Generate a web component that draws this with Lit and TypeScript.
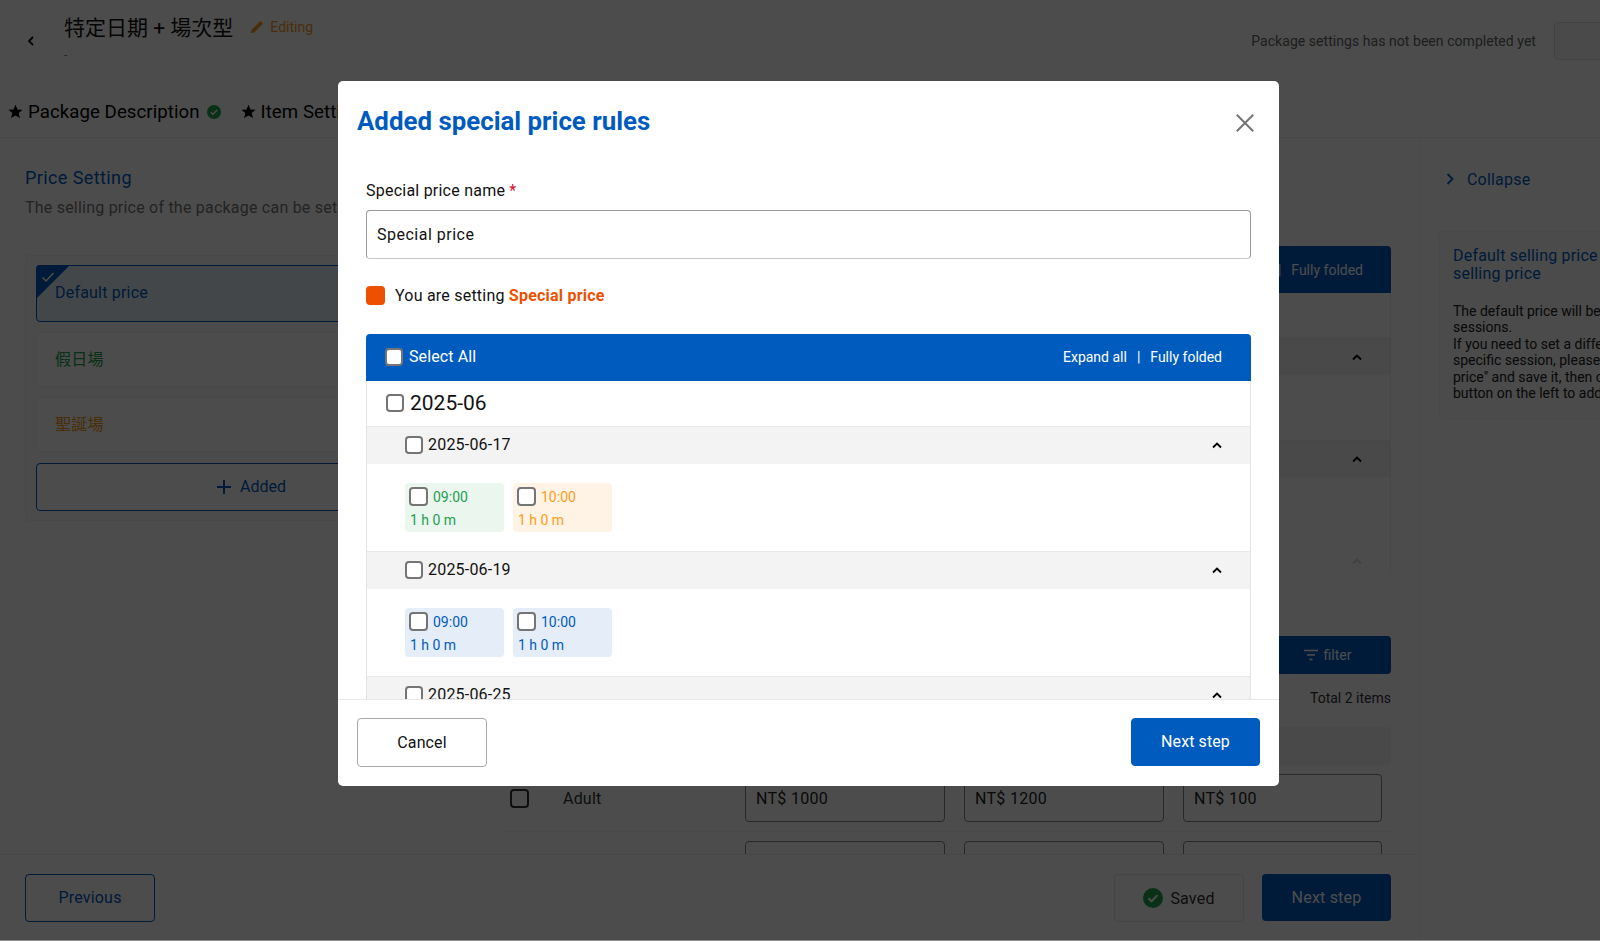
import { LitElement, html, css, svg } from "lit";
import { customElement } from "lit/decorators.js";

const chevUp = svg`<path d="M3 9.5 L7 5.5 L11 9.5" fill="none" stroke="currentColor" stroke-width="1.8"/>`;
const starPath = svg`<path d="M8 .8l2.1 5 5.4.4-4.1 3.5 1.3 5.3L8 12.2l-4.7 2.8 1.3-5.3L.5 6.2l5.4-.4z" fill="currentColor"/>`;
const checkCircle = svg`<circle cx="10" cy="10" r="10" fill="currentColor"/><path d="M5.5 10.3l3 3 6-6.2" fill="none" stroke="#fff" stroke-width="2"/>`;

type Chip = { time: string; tone: string };

@customElement("app-root")
export class AppRoot extends LitElement {
  static styles = css`
    :host { display: block; position: relative; width: 1600px; height: 941px; overflow: hidden; font-family: Roboto, "Noto Sans CJK TC", sans-serif; color: #000; background: #8a8a8a; }
    * { box-sizing: border-box; }
    input[type="checkbox"] { appearance: none; -webkit-appearance: none; margin: 0; width: 18px; height: 18px; flex: none; background: #fff; border: 2px solid #757575; border-radius: 4px; }
    .page { height: 940px; display: flex; flex-direction: column; background: #fff; }
    .header { height: 83px; flex: none; display: flex; padding-left: 24px; position: relative; }
    .back { width: 14px; height: 14px; margin-top: 34px; margin-right: 26px; color: #000; }
    .titles { padding-top: 11px; }
    .title-line { display: flex; align-items: center; height: 30px; }
    .title { font-size: 21px; color: #111; }
    .editing { display: flex; align-items: center; gap: 6px; margin-left: 17px; padding-top: 2px; color: #f39a1e; font-size: 14px; }
    .editing svg { width: 14px; height: 14px; }
    .dash { font-size: 12px; color: #888; margin-top: 7px; }
    .head-right { margin-left: auto; display: flex; align-items: center; gap: 18px; height: 38px; margin-top: 22px; font-size: 14px; color: #666; letter-spacing: 0.05px; }
    .head-btn { width: 60px; height: 38px; margin-right: -14px; border: 1px solid #ddd; border-radius: 4px; background: #f7f7f7; }
    .tabs { height: 55px; flex: none; display: flex; align-items: center; gap: 20px; padding: 3px 8px 0; border-bottom: 1px solid #f2f2f2; font-size: 18.67px; letter-spacing: 0.05px; }
    .tab { display: flex; align-items: center; gap: 5px; white-space: nowrap; }
    .tab svg { width: 15px; height: 15px; }
    .tab .ok { width: 14px; height: 14px; margin-left: 2px; color: #22a052; }
    .body { flex: 1; display: flex; min-height: 0; }
    .main { width: 1420px; flex: none; display: flex; flex-direction: column; letter-spacing: 0.2px; }
    .scroll { flex: 1; min-height: 0; overflow: hidden; padding: 29px 29px 0 25px; }
    .h2 { font-size: 18px; line-height: 22px; color: #005bbf; letter-spacing: 0.4px; }
    .sub { font-size: 16px; line-height: 20px; margin-top: 9px; color: #777; white-space: nowrap; letter-spacing: 0.22px; }
    .grid { display: grid; grid-template-columns: 452px 891px; gap: 23px; }
    .box { margin-top: 37px; height: 266px; padding: 9px 10px; border: 1px solid #f0f0f0; border-radius: 4px; background: #fafafa; display: flex; flex-direction: column; gap: 10px; }
    .pcard { position: relative; height: 55px; flex: none; padding: 0 0 4px 18px; display: flex; align-items: center; font-size: 16px; background: #fff; border: 1px solid #f0f0f0; border-radius: 4px; }
    .pcard.active { height: 57px; padding-bottom: 2px; color: #005bbf; background: #e5edf8; border-color: #005bbf; }
    .pcard.green { color: #22a052; }
    .pcard.orange { color: #f39a1e; }
    .corner { position: absolute; left: -1px; top: -1px; width: 34px; height: 34px; background: #005bbf; clip-path: polygon(0 0, 100% 0, 0 100%); border-top-left-radius: 4px; }
    .corner-check { position: absolute; left: 4px; top: 5px; width: 14px; height: 12px; color: #fff; }
    .add { height: 48px; flex: none; margin-top: 1px; padding-bottom: 1px; display: flex; align-items: center; justify-content: center; gap: 8px; color: #005bbf; font-size: 16px; background: #fff; border: 1px solid #005bbf; border-radius: 4px; letter-spacing: 0; }
    .add svg { width: 16px; height: 16px; }
    .right { margin-top: 28px; }
    .bar { height: 47px; background: #005bbf; color: #fff; border-radius: 4px 4px 0 0; display: flex; justify-content: flex-end; align-items: center; gap: 10px; padding-right: 28px; font-size: 14px; letter-spacing: 0; }
    .r-list { border: 1px solid #eee; border-top: 0; height: 282px; border-radius: 0 0 4px 4px; }
    .r-gap { height: 45px; }
    .r-date { height: 37px; background: #f3f3f3; border-top: 1px solid #eee; display: flex; justify-content: flex-end; align-items: center; padding-right: 26px; color: #000; }
    .r-date svg { width: 14px; height: 14px; }
    .r-date.late { margin-top: 65px; }
    .r-date.faint { margin-top: 65px; background: #fff; border: 0; color: #ddd; }
    .filter-row { display: flex; justify-content: flex-end; margin-top: 61px; }
    .filter { width: 129px; height: 38px; border-radius: 4px; background: #005bbf; color: #fff; display: flex; align-items: center; justify-content: center; gap: 6px; padding-left: 2px; font-size: 14px; letter-spacing: 0; }
    .filter svg { width: 14px; height: 12px; }
    .total { text-align: right; font-size: 14px; line-height: 16px; margin-top: 16px; color: #333; letter-spacing: 0; }
    .thead { height: 38px; margin-top: 21px; background: #f5f5f5; border-radius: 4px; }
    .trow { height: 67px; display: flex; align-items: center; border-bottom: 1px solid #f3f3f3; padding-left: 10px; font-size: 16px; }
    .trow input[type="checkbox"] { width: 19px; height: 19px; border-color: #333; background: transparent; }
    .trow .name { width: 182px; margin-left: 34px; color: #333; }
    .price { width: 200px; height: 48px; margin-right: 19px; padding: 0 10px; border: 1px solid #888; border-radius: 4px; font-size: 16px; letter-spacing: 0.3px; color: #222; display: flex; align-items: center; }
    .price + .price + .price { width: 199px; margin-right: 0; }
    .trow.next { align-items: flex-start; padding-top: 9px; border: 0; }
    .trow.next .name, .trow.next input[type="checkbox"] { visibility: hidden; }
    .foot { height: 86px; flex: none; border-top: 1px solid #f0f0f0; padding: 19px 29px 0 25px; display: flex; align-items: flex-start; }
    .btn { height: 48px; width: 130px; display: flex; align-items: center; justify-content: center; font-size: 16px; border-radius: 4px; }
    .btn.line { border: 1px solid #005bbf; color: #005bbf; background: #fff; padding-bottom: 2px; }
    .btn.saved { margin-left: auto; border: 1px solid #e8e8e8; color: #333; gap: 7px; }
    .btn.saved svg { width: 20px; height: 20px; color: #22a052; }
    .btn.solid { width: 129px; height: 47px; margin-left: 18px; background: #005bbf; color: #fff; }
    .aside { flex: 1; border-left: 1px solid #f3f3f3; padding: 30px 0 0 18px; overflow: hidden; background: #fff; letter-spacing: 0.2px; }
    .collapse { display: flex; align-items: center; gap: 10px; height: 22px; margin-left: 4px; font-size: 16px; color: #005bbf; }
    .collapse svg { width: 14px; height: 14px; }
    .tip { margin-top: 41px; width: 260px; height: 188px; padding: 15px 0 0 13px; background: #fafafa; border: 1px solid #f5f5f5; border-radius: 4px; white-space: nowrap; }
    .tip h4 { margin: 0; font-size: 16px; line-height: 18px; font-weight: 400; color: #005bbf; }
    .tip p { margin: 20px 0 0; font-size: 14px; line-height: 16.4px; color: #222; letter-spacing: 0; }

    .overlay { position: absolute; left: 0; right: 0; top: 0; bottom: 1px; background: rgba(0, 0, 0, 0.7); padding: 81px 0 0 338px; }
    .modal { width: 941px; height: 705px; background: #fff; border-radius: 5px; display: flex; flex-direction: column; overflow: hidden; }
    .m-head { height: 83px; flex: none; display: flex; justify-content: space-between; padding: 21px 24px 0 19px; }
    .m-title { margin: 0; font-size: 25.85px; line-height: 38px; font-weight: 700; color: #005bbf; }
    .close { width: 20px; height: 20px; margin-top: 11px; color: #757575; }
    .m-body { flex: 1; min-height: 0; overflow: hidden; padding: 16px 28px 0 28px; }
    .label { font-size: 16px; line-height: 22px; color: #111; letter-spacing: 0.23px; }
    .req { color: #d8112d; }
    .name-input { height: 49px; margin-top: 8px; padding: 0 10px 1px; display: flex; align-items: center; font-size: 16px; letter-spacing: 0.5px; color: #111; border: 1px solid #9a9a9a; border-bottom-color: #c6c6c6; border-radius: 4px; }
    .setting { display: flex; align-items: center; gap: 10px; height: 20px; margin-top: 26px; font-size: 16px; letter-spacing: 0.22px; color: #111; }
    .swatch { width: 19px; height: 19px; border-radius: 4px; background: #ec5000; flex: none; }
    .setting b { font-weight: 700; color: #ec5000; }
    .list { margin-top: 29px; }
    .l-head { height: 47px; display: flex; align-items: center; gap: 6px; padding: 0 29px 2px 19px; background: #005bbf; color: #fff; border-radius: 4px 4px 0 0; font-size: 16px; letter-spacing: 0.1px; }
    .l-head .links { margin-left: auto; display: flex; align-items: center; gap: 10px; font-size: 14px; letter-spacing: 0; }
    .l-body { border-left: 1px solid #e4e4e4; border-right: 1px solid #e4e4e4; }
    .month { height: 45px; display: flex; align-items: center; gap: 6px; padding: 0 0 2px 19px; font-size: 21px; color: #111; }
    .date { height: 38px; display: flex; align-items: center; gap: 5px; padding: 0 26px 2px 38px; background: #f3f3f3; border-top: 1px solid #e8e8e8; font-size: 16px; letter-spacing: 0.2px; color: #111; }
    .date svg { width: 14px; height: 14px; margin-left: auto; color: #000; }
    .chips { height: 87px; padding: 19px 0 0 38px; display: flex; gap: 9.5px; }
    .chip { width: 98.5px; height: 49px; padding: 4px 4px; border-radius: 4px; font-size: 14px; }
    .chip input[type="checkbox"] { width: 19px; height: 19px; }
    .chip .top { display: flex; align-items: center; gap: 5px; height: 19px; }
    .chip .dur { margin: 4.5px 0 0 1px; line-height: 18px; }
    .green-chip { background: #eaf6ee; color: #22a052; }
    .orange-chip { background: #fff3e5; color: #ff9b1a; }
    .blue-chip { background: #e5edf8; color: #005bbf; }
    .m-foot { height: 87px; flex: none; display: flex; justify-content: space-between; padding: 18px 19px 0 19px; border-top: 1px solid #e8e8e8; }
    .m-btn { width: 130px; height: 49px; display: flex; align-items: center; justify-content: center; font-size: 16px; letter-spacing: 0.1px; border-radius: 4px; color: #111; background: #fff; border: 1px solid #aaa; padding-bottom: 1px; }
    .m-btn.primary { width: 129px; height: 48px; background: #005bbf; color: #fff; border-color: #005bbf; padding-bottom: 2px; }
  `;

  private chevron() {
    return html`<svg viewBox="0 0 14 14">${chevUp}</svg>`;
  }

  private dateRow(d: string) {
    return html`<div class="date"><input type="checkbox" /><span>${d}</span>${this.chevron()}</div>`;
  }

  private chips(items: Chip[]) {
    return html`<div class="chips">
      ${items.map(
        (c) => html`<div class="chip ${c.tone}-chip">
          <div class="top"><input type="checkbox" /><span>${c.time}</span></div>
          <div class="dur">1 h 0 m</div>
        </div>`
      )}
    </div>`;
  }

  private renderPage() {
    return html`<div class="page">
      <div class="header">
        <svg class="back" viewBox="0 0 14 14"><path d="M9 3L5 7l4 4" fill="none" stroke="currentColor" stroke-width="1.8" /></svg>
        <div class="titles">
          <div class="title-line">
            <span class="title">特定日期 + 場次型</span>
            <span class="editing">
              <svg viewBox="0 0 14 14"><path d="M1 13l.6-3.2L9.8 1.6a1 1 0 0 1 1.4 0l1.2 1.2a1 1 0 0 1 0 1.4L4.2 12.4z" fill="currentColor" /></svg>
              Editing
            </span>
          </div>
          <div class="dash">-</div>
        </div>
        <div class="head-right">
          <span>Package settings has not been completed yet</span>
          <span class="head-btn"></span>
        </div>
      </div>
      <div class="tabs">
        <div class="tab"><svg viewBox="0 0 16 16">${starPath}</svg>Package Description<svg class="ok" viewBox="0 0 20 20">${checkCircle}</svg></div>
        <div class="tab"><svg viewBox="0 0 16 16">${starPath}</svg>Item Settings</div>
      </div>
      <div class="body">
        <div class="main">
          <div class="scroll">
            <div class="h2">Price Setting</div>
            <div class="sub">The selling price of the package can be set</div>
            <div class="grid">
              <div class="box">
                <div class="pcard active">
                  <span class="corner"></span>
                  <svg class="corner-check" viewBox="0 0 14 12"><path d="M1.5 6.5l3.5 3.5 7.5-8" fill="none" stroke="currentColor" stroke-width="1.5" /></svg>
                  Default price
                </div>
                <div class="pcard green">假日場</div>
                <div class="pcard orange">聖誕場</div>
                <div class="add"><svg viewBox="0 0 16 16"><path d="M8 1v14M1 8h14" stroke="currentColor" stroke-width="2" /></svg>Added</div>
              </div>
              <div class="right">
                <div class="bar"><span>Expand all</span><span>|</span><span>Fully folded</span></div>
                <div class="r-list">
                  <div class="r-gap"></div>
                  <div class="r-date">${this.chevron()}</div>
                  <div class="r-date late">${this.chevron()}</div>
                  <div class="r-date faint">${this.chevron()}</div>
                </div>
                <div class="filter-row">
                  <div class="filter"><svg viewBox="0 0 14 12"><path d="M0 1.5h14M3 6h8M5.5 10.5h3" stroke="currentColor" stroke-width="1.5" /></svg>filter</div>
                </div>
                <div class="total">Total 2 items</div>
                <div class="thead"></div>
                <div class="trow">
                  <input type="checkbox" />
                  <span class="name">Adult</span>
                  <span class="price">NT$ 1000</span><span class="price">NT$ 1200</span><span class="price">NT$ 100</span>
                </div>
                <div class="trow next">
                  <input type="checkbox" />
                  <span class="name">Child</span>
                  <span class="price"></span><span class="price"></span><span class="price"></span>
                </div>
              </div>
            </div>
          </div>
          <div class="foot">
            <div class="btn line">Previous</div>
            <div class="btn saved"><svg viewBox="0 0 20 20">${checkCircle}</svg>Saved</div>
            <div class="btn solid">Next step</div>
          </div>
        </div>
        <div class="aside">
          <div class="collapse"><svg viewBox="0 0 14 14"><path d="M4.5 2l5 5-5 5" fill="none" stroke="currentColor" stroke-width="1.8" /></svg>Collapse</div>
          <div class="tip">
            <h4>Default selling price / Special<br />selling price</h4>
            <p>The default price will be applied to all<br />sessions.<br />If you need to set a different price for a<br />specific session, please click "Added special<br />price" and save it, then click the "Added"<br />button on the left to add it.</p>
          </div>
        </div>
      </div>
    </div>`;
  }

  render() {
    return html`${this.renderPage()}
      <div class="overlay">
        <div class="modal">
          <div class="m-head">
            <h2 class="m-title">Added special price rules</h2>
            <svg class="close" viewBox="0 0 20 20"><path d="M1.8 1.8l16.4 16.4M18.2 1.8L1.8 18.2" stroke="currentColor" stroke-width="2" /></svg>
          </div>
          <div class="m-body">
            <div class="label">Special price name <span class="req">*</span></div>
            <div class="name-input">Special price</div>
            <div class="setting"><span class="swatch"></span><span>You are setting <b>Special price</b></span></div>
            <div class="list">
              <div class="l-head">
                <input type="checkbox" /><span>Select All</span>
                <div class="links"><span>Expand all</span><span>|</span><span>Fully folded</span></div>
              </div>
              <div class="l-body">
                <div class="month"><input type="checkbox" /><span>2025-06</span></div>
                ${this.dateRow("2025-06-17")}
                ${this.chips([{ time: "09:00", tone: "green" }, { time: "10:00", tone: "orange" }])}
                ${this.dateRow("2025-06-19")}
                ${this.chips([{ time: "09:00", tone: "blue" }, { time: "10:00", tone: "blue" }])}
                ${this.dateRow("2025-06-25")}
              </div>
            </div>
          </div>
          <div class="m-foot">
            <div class="m-btn">Cancel</div>
            <div class="m-btn primary">Next step</div>
          </div>
        </div>
      </div>`;
  }
}
